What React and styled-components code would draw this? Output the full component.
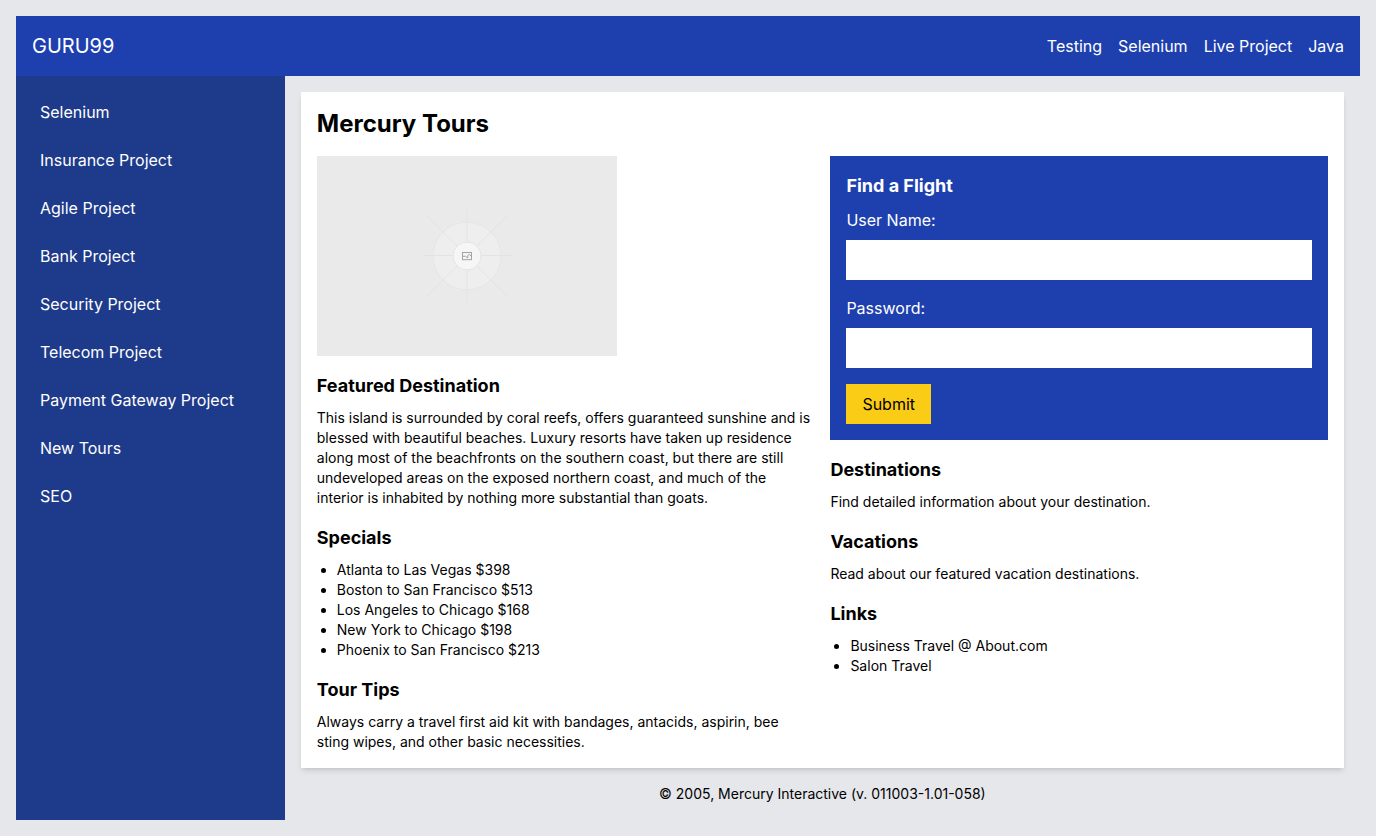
import React from "react";
import styled, { createGlobalStyle } from "styled-components";

const GlobalStyle = createGlobalStyle`
  *, *::before, *::after { box-sizing: border-box; }
  body {
    margin: 0;
    background: #e5e7eb;
    color: #000;
    font-family: Inter, "Liberation Sans", sans-serif;
    font-size: 16px;
    line-height: 24px;
  }
`;

const Page = styled.div`
  display: flex;
  flex-direction: column;
  min-height: 100vh;
  padding: 16px;
`;

const Header = styled.header`
  display: flex;
  align-items: center;
  justify-content: space-between;
  padding: 16px;
  background: #1e40af;
  color: #fff;
`;

const Brand = styled.div`
  font-size: 20px;
  line-height: 28px;
`;

const TopNav = styled.nav`
  display: flex;
  gap: 16px;
`;

const NavLink = styled.a`
  color: #fff;
  text-decoration: none;
`;

const Body = styled.div`
  display: flex;
  flex: 1;
`;

const Sidebar = styled.nav`
  flex: 0 0 20%;
  display: flex;
  flex-direction: column;
  gap: 8px;
  padding: 16px;
  background: #1e3a8a;
`;

const SideLink = styled(NavLink)`
  padding: 8px;
`;

const Main = styled.main`
  flex: 1;
  min-width: 0;
  padding: 16px;
`;

const Card = styled.div`
  padding: 16px;
  background: #fff;
  box-shadow: 0 4px 6px -1px rgba(0, 0, 0, 0.1), 0 2px 4px -2px rgba(0, 0, 0, 0.1);
`;

const Title = styled.h1`
  margin: 0 0 16px;
  font-size: 24px;
  line-height: 32px;
  font-weight: 700;
`;

const Columns = styled.div`
  display: grid;
  grid-template-columns: repeat(2, minmax(0, 1fr));
  gap: 16px;
`;

const Column = styled.div`
  display: flex;
  flex-direction: column;
  gap: 16px;
`;

const Heading = styled.h2`
  margin: 0 0 8px;
  font-size: 18px;
  line-height: 28px;
  font-weight: 700;
`;

const Text = styled.p`
  margin: 0;
  font-size: 14px;
  line-height: 20px;
`;

const List = styled.ul`
  margin: 0;
  padding-left: 20px;
  list-style: disc;
  font-size: 14px;
  line-height: 20px;
`;

const Picture = styled.svg`
  display: block;
  width: 300px;
  max-width: 100%;
  height: 200px;
  background: #eaeaea;
`;

const Form = styled.form`
  padding: 16px;
  background: #1e40af;
  color: #fff;
`;

const Label = styled.label`
  display: block;
  margin-bottom: 8px;
`;

const Input = styled.input`
  display: block;
  width: 100%;
  height: 40px;
  margin: 0 0 16px;
  padding: 8px;
  border: 0;
  border-radius: 0;
  background: #fff;
  color: #000;
  font: inherit;
`;

const SubmitButton = styled.button`
  display: block;
  padding: 8px 16px;
  border: 0;
  background: #facc15;
  color: #000;
  font: inherit;
  cursor: pointer;
`;

const Footer = styled.footer`
  margin-top: 16px;
  font-size: 14px;
  line-height: 20px;
  text-align: center;
`;

const topLinks = ["Testing", "Selenium", "Live Project", "Java"];
const sideLinks = [
  "Selenium",
  "Insurance Project",
  "Agile Project",
  "Bank Project",
  "Security Project",
  "Telecom Project",
  "Payment Gateway Project",
  "New Tours",
  "SEO",
];
const specials = [
  "Atlanta to Las Vegas $398",
  "Boston to San Francisco $513",
  "Los Angeles to Chicago $168",
  "New York to Chicago $198",
  "Phoenix to San Francisco $213",
];
const links = ["Business Travel @ About.com", "Salon Travel"];

function Placeholder() {
  return (
    <Picture viewBox="0 0 300 200" role="img" aria-label="Featured destination">
      <circle cx="150" cy="100" r="34" fill="#eeeeee" stroke="#e6e6e6" strokeWidth="1" />
      <path
        d="M150 54V146M106 99.5H194M110 60L190 140M190 60L110 140"
        stroke="#e3e3e3"
        strokeWidth="1"
        fill="none"
      />
      <circle cx="150" cy="100" r="14" fill="#f6f6f6" stroke="#e4e4e4" strokeWidth="1" />
      <g fill="none" stroke="#9c9c9c" strokeWidth="0.9">
        <rect x="145.5" y="96.5" width="9" height="7.2" />
        <path d="M145.5 100.3H148.6L150 101.6H151.2" />
        <path d="M150.8 101.4V99.6L152.2 98.4L154.5 100.2" />
      </g>
    </Picture>
  );
}

function Section({ title, children }) {
  return (
    <section>
      <Heading>{title}</Heading>
      {children}
    </section>
  );
}

function Bullets({ items }) {
  return (
    <List>
      {items.map((item) => (
        <li key={item}>{item}</li>
      ))}
    </List>
  );
}

export default function App() {
  return (
    <>
      <GlobalStyle />
      <Page>
        <Header>
          <Brand>GURU99</Brand>
          <TopNav>
            {topLinks.map((name) => (
              <NavLink key={name} href="#">{name}</NavLink>
            ))}
          </TopNav>
        </Header>
        <Body>
          <Sidebar>
            {sideLinks.map((name) => (
              <SideLink key={name} href="#">{name}</SideLink>
            ))}
          </Sidebar>
          <Main>
            <Card>
              <Title>Mercury Tours</Title>
              <Columns>
                <Column>
                  <Placeholder />
                  <Section title="Featured Destination">
                    <Text>
                      This island is surrounded by coral reefs, offers guaranteed sunshine and is
                      blessed with beautiful beaches. Luxury resorts have taken up residence along
                      most of the beachfronts on the southern coast, but there are still undeveloped
                      areas on the exposed northern coast, and much of the interior is inhabited by
                      nothing more substantial than goats.
                    </Text>
                  </Section>
                  <Section title="Specials">
                    <Bullets items={specials} />
                  </Section>
                  <Section title="Tour Tips">
                    <Text>
                      Always carry a travel first aid kit with bandages, antacids, aspirin, bee sting
                      wipes, and other basic necessities.
                    </Text>
                  </Section>
                </Column>
                <Column>
                  <Form onSubmit={(event) => event.preventDefault()}>
                    <Heading>Find a Flight</Heading>
                    <Label htmlFor="username">User Name:</Label>
                    <Input id="username" type="text" />
                    <Label htmlFor="password">Password:</Label>
                    <Input id="password" type="password" />
                    <SubmitButton type="submit">Submit</SubmitButton>
                  </Form>
                  <Section title="Destinations">
                    <Text>Find detailed information about your destination.</Text>
                  </Section>
                  <Section title="Vacations">
                    <Text>Read about our featured vacation destinations.</Text>
                  </Section>
                  <Section title="Links">
                    <Bullets items={links} />
                  </Section>
                </Column>
              </Columns>
            </Card>
            <Footer>© 2005, Mercury Interactive (v. 011003-1.01-058)</Footer>
          </Main>
        </Body>
      </Page>
    </>
  );
}
